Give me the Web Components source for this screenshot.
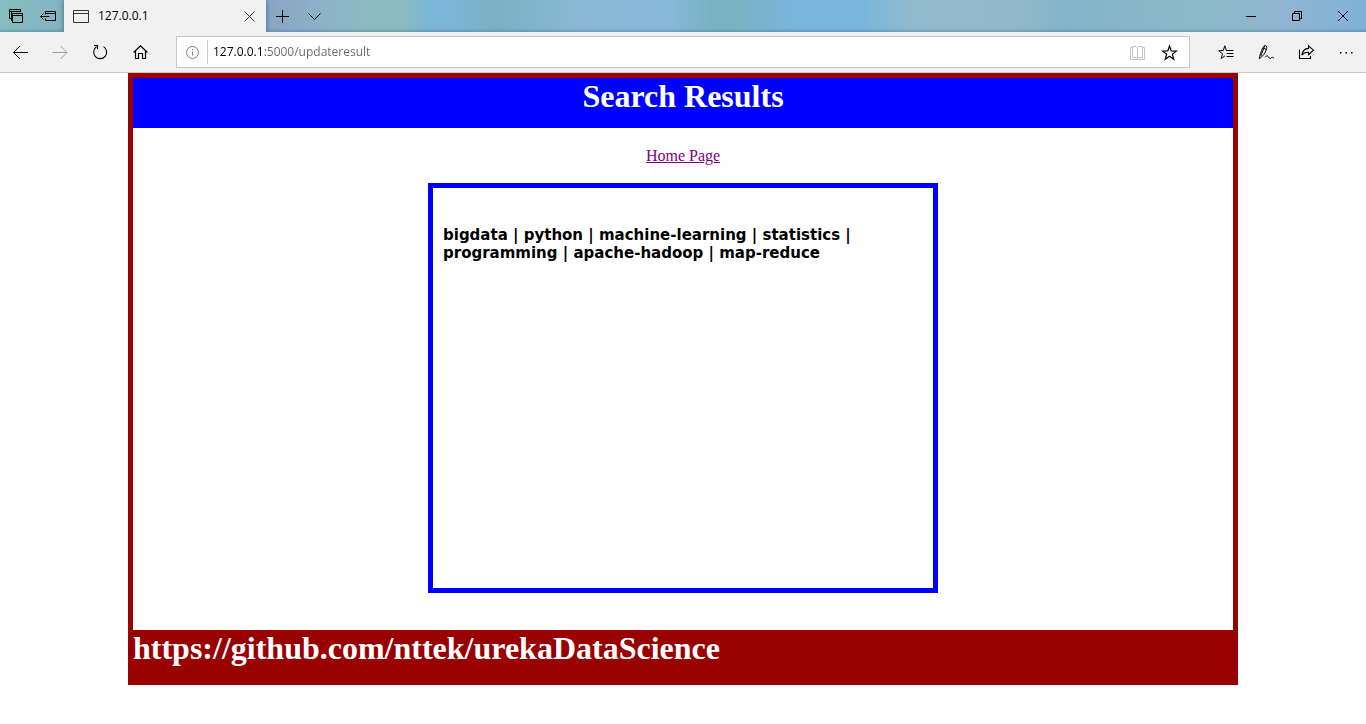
<!DOCTYPE html>
<html lang="en">
<head>
<meta charset="utf-8">
<title>127.0.0.1</title>
<style>
  body { margin: 0; background: #fff; font-family: "Liberation Serif", "Times New Roman", serif; font-size: 16px; }
</style>
</head>
<body>
<browser-tabs></browser-tabs>
<browser-toolbar></browser-toolbar>
<results-page heading="Search Results">
  <result-box>bigdata | python | machine-learning | statistics | programming | apache-hadoop | map-reduce</result-box>
  <span slot="footer">https://github.com/nttek/urekaDataScience</span>
</results-page>

<template id="tabs-tpl">
  <style>
    :host { display: flex; height: 32px; overflow: hidden; font: 12px/16px "Open Sans", sans-serif; color: #000;
      background: linear-gradient(to bottom, transparent 28px, rgba(50,90,120,.3) 32px),
        linear-gradient(90deg, #86bdbd 0, #84b5c4 4%, #8aa6c4 20%, #8cb4c8 24%, #8bbac0 27%, #8abbc0 29.5%, #7bb5d8 31.5%, #7bb5d8 33%, #7db1c6 36%, #80b4cc 39%, #8ab8d4 42%, #88b8da 49%, #7ab2c4 52%, #7ab2c4 54%, #78b6dc 58%, #78b6dc 63%, #92bace 67%, #92b9c8 74%, #84b4ca 78%, #8bb9c9 88%, #8fb5d0 94%, #80b1d8 100%); }
    .tab { width: 202px; box-sizing: border-box; display: flex; align-items: center; background: #f1f1f1; padding-left: 9px; box-shadow: 0 0 5px rgba(20,50,80,.6); }
    .tab span { flex: 1; margin-left: 8px; }
    .window { display: flex; margin-left: auto; }
  </style>
  <tool-button icon="tabs" label="Tabs you've set aside"></tool-button>
  <tool-button icon="aside" label="Set these tabs aside"></tool-button>
  <div class="tab"><glyph-icon name="page"></glyph-icon><span>127.0.0.1</span><tool-button icon="close" label="Close tab" size="34"></tool-button></div>
  <tool-button icon="plus" label="New tab"></tool-button>
  <tool-button icon="chevron" label="Show tab previews"></tool-button>
  <div class="window">
    <tool-button icon="minimize" label="Minimize" size="46"></tool-button>
    <tool-button icon="restore" label="Restore" size="46"></tool-button>
    <tool-button icon="exit" label="Close" size="46"></tool-button>
  </div>
</template>

<template id="toolbar-tpl">
  <style>
    :host { display: flex; align-items: center; height: 40px; background: #f1f1f1; border-bottom: 1px solid #c8c8c8; }
    .address { flex: 1; min-width: 0; height: 32px; box-sizing: border-box; margin: 0 16px; padding-right: 4px; display: flex; align-items: center; background: #fff; border: 1px solid #c8c8c8; }
    .rule { width: 1px; height: 24px; background: #ccc; }
    input { flex: 1; min-width: 0; border: 0; outline: 0; margin: 0 0 0 5px; padding: 0; height: 24px; font: 12px/24px "Open Sans", sans-serif;
      background: linear-gradient(90deg, #000 51px, #666 51px); -webkit-background-clip: text; background-clip: text; -webkit-text-fill-color: transparent; }
  </style>
  <tool-button icon="back" label="Back" size="40"></tool-button>
  <tool-button icon="forward" label="Forward" size="40" tint="#a0a0a0"></tool-button>
  <tool-button icon="refresh" label="Refresh" size="40"></tool-button>
  <tool-button icon="home" label="Home" size="40"></tool-button>
  <div class="address">
    <tool-button icon="info" label="Site information" size="30" tint="#808080"></tool-button>
    <div class="rule"></div>
    <input type="text" aria-label="Address" value="127.0.0.1:5000/updateresult" spellcheck="false">
    <tool-button icon="book" label="Reading view" tint="#c4c4c4"></tool-button>
    <tool-button icon="star" label="Add to favorites"></tool-button>
  </div>
  <tool-button icon="hub" label="Hub" size="40"></tool-button>
  <tool-button icon="pen" label="Add notes" size="40"></tool-button>
  <tool-button icon="share" label="Share" size="40"></tool-button>
  <tool-button icon="more" label="More" size="40"></tool-button>
</template>

<template id="page-tpl">
  <style>
    :host { display: block; box-sizing: border-box; max-width: 1110px; margin: 0 auto; border: 5px solid #900; }
    header { background: #00f; color: #fff; text-align: center; min-height: 50px; }
    h1, footer { margin: 0; font-size: 32px; line-height: 37px; font-weight: bold; }
    main { display: flex; flex-direction: column; align-items: center; gap: 18px; padding: 19px 0 37px; }
    a { color: #800080; line-height: 18px; }
    footer { background: #900; color: #fff; min-height: 50px; }
  </style>
  <header><h1></h1></header>
  <main><a href="/">Home Page</a><slot></slot></main>
  <footer><slot name="footer"></slot></footer>
</template>

<template id="box-tpl">
  <style>
    :host { display: block; box-sizing: border-box; width: 100%; max-width: 510px; min-height: 410px; border: 5px solid #00f; padding: 38px 10px; font: bold 15px/18px "DejaVu Sans", Verdana, sans-serif; color: #000; }
    p { margin: 0; }
  </style>
  <p><slot></slot></p>
</template>

<script>
const icons = {
  tabs: '<path d="M4 10.500H1.500v-9h11V4M1.500 3.500h11M5 12.500H3.500V3.500M5.500 5.500h9v9h-10v-9h1M4.500 7.500h10"/>',
  aside: '<path d="M5.500 6.500V3.500h10v9h-10V10.500M5.500 5.500h10M.5 8.500h9M3.500 5.500l-3 3 3 3"/>',
  page: '<path d="M.5 2.500h15v12H.5zM.5 5.500h15" stroke="#333"/>',
  close: '<path d="M3.500 3.500l10 10M13.500 3.500l-10 10" stroke="#333"/>',
  plus: '<path d="M8.500 2v13M2 8.500h13"/>',
  chevron: '<path d="M2.500 5.500l6 6 6-6"/>',
  minimize: '<path d="M3 8.500h10"/>',
  restore: '<path d="M3.500 5.500h7v7h-7zM5.500 5.500v-2h7v7h-2"/>',
  exit: '<path d="M3 3l10 10M13 3L3 13"/>',
  back: '<path d="M1.500 8.500H16M8 2L1.500 8.500 8 15"/>',
  forward: '<path d="M.5 8.500H15M8.500 2L15 8.500 8.500 15"/>',
  refresh: '<path d="M4.500 2.800A6.500 6.500 0 1 0 11.500 2.600M2 1.500h3.500V5" stroke-width="1.100"/>',
  home: '<path d="M1.500 8.500L8.500 1.800l7 6.700M3.500 7v7.500h3v-5h4v5h3V7" stroke-width="1.200"/>',
  info: '<circle cx="8.500" cy="8.500" r="6"/><path d="M8.500 7.500v4M8.500 5v1.200"/>',
  book: '<path d="M3 3.500H1.500v12H15.500V3.500H14M3.500 2.500H7l1.500 1 1.500-1h3.500v11H10l-1.500 1-1.500-1H3.500zM8.500 3.500v11"/>',
  star: '<path d="M8.500 2l1.700 4.900 5.100.2-4 3.100 1.500 5-4.300-2.900-4.300 2.900 1.500-5-4-3.100 5.100-.2z" stroke-width="1.200"/>',
  hub: '<path d="M8.400 6.500L6.800 1.800 5.300 6.500.8 6.800l3.700 2.900-1.400 4.900 3.900-2.800M8 6.500h7.500M8.500 9.500h7M8.500 12.500h7"/>',
  pen: '<path d="M1.200 14.800L2.500 9.500C4 5 5.500 1.500 7.300 1.500c2 0 1.600 2.700.8 4.700-1.200 3-2.800 5.800-6.900 8.600zM6.700 2L2.800 12M6 4.500l2.200.8M7 13.200c1.700-2 2.900-1.400 3.700 0 .8 1.500 1.800 1.700 2.700.5.900-.9 1.600-.3 2.600.7"/>',
  share: '<path d="M1.500 5.500v9h11V12M10.500 1.800l5 4.400-5 4.500V8.300C7.500 8 5.500 9 3.800 11.200 4.500 7 7 4.600 10.500 4.400z" stroke-width="1.100"/>',
  more: '<path d="M2 8h1.500v1.500H2zM7.500 8H9v1.500H7.500zM13 8h1.500v1.500H13z" fill="currentColor" stroke="none"/>'
};

class GlyphIcon extends HTMLElement {
  connectedCallback() {
    if (this.shadowRoot) return;
    this.attachShadow({ mode: 'open' }).innerHTML =
      `<style>:host{display:block;width:17px;height:17px}svg{display:block}</style>
       <svg width="17" height="17" viewBox="0 0 17 17" fill="none" stroke="currentColor" aria-hidden="true">${icons[this.getAttribute('name')]}</svg>`;
  }
}

class ToolButton extends HTMLElement {
  connectedCallback() {
    if (this.shadowRoot) return;
    const size = this.getAttribute('size') || 32;
    const tint = this.getAttribute('tint') || '#000';
    this.attachShadow({ mode: 'open' }).innerHTML =
      `<style>
        :host{display:block;flex:none;width:${size}px;height:32px}
        button{display:flex;align-items:center;justify-content:center;width:100%;height:100%;margin:0;padding:0 0 0 1px;box-sizing:border-box;border:0;background:none;color:${tint}}
       </style>
       <button type="button" aria-label="${this.getAttribute('label')}"><glyph-icon name="${this.getAttribute('icon')}"></glyph-icon></button>`;
  }
}

class TemplateElement extends HTMLElement {
  connectedCallback() {
    if (this.shadowRoot) return;
    const tpl = document.getElementById(this.constructor.template);
    this.attachShadow({ mode: 'open' }).append(tpl.content.cloneNode(true));
  }
}
class BrowserTabs extends TemplateElement { static template = 'tabs-tpl'; }
class BrowserToolbar extends TemplateElement { static template = 'toolbar-tpl'; }
class ResultBox extends TemplateElement { static template = 'box-tpl'; }
class ResultsPage extends TemplateElement {
  static template = 'page-tpl';
  connectedCallback() {
    super.connectedCallback();
    this.shadowRoot.querySelector('h1').textContent = this.getAttribute('heading');
  }
}

customElements.define('glyph-icon', GlyphIcon);
customElements.define('tool-button', ToolButton);
customElements.define('browser-tabs', BrowserTabs);
customElements.define('browser-toolbar', BrowserToolbar);
customElements.define('result-box', ResultBox);
customElements.define('results-page', ResultsPage);
</script>
</body>
</html>
